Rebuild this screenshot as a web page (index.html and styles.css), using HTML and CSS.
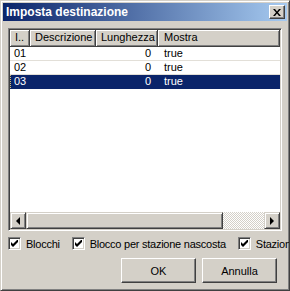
FILE: index.html
```html
<!DOCTYPE html>
<html>
<head>
	<title>Imposta destinazione</title>
	<link rel="stylesheet" href="styles.css">
</head>
<body>
	<div class="window">
		<!-- Title bar -->
		<div class="titlebar">
			<span class="title">Imposta destinazione</span>
			<button class="close-btn" type="button">
				<svg width="8" height="7" viewBox="0 0 8 7"><path d="M0 0h2l2 2.5L6 0h2L5 3.5 8 7H6L4 4.5 2 7H0l3-3.5z" fill="#000"/></svg>
			</button>
		</div>

		<div class="content">
			<!-- Table -->
			<div class="listbox">
				<div class="grid">
					<div class="row header">
						<div class="cell c-id">I..</div>
						<div class="cell c-desc">Descrizione</div>
						<div class="cell c-len">Lunghezza</div>
						<div class="cell c-show">Mostra</div>
					</div>
					<div class="row">
						<div class="cell c-id">01</div>
						<div class="cell c-desc"></div>
						<div class="cell c-len num">0</div>
						<div class="cell c-show">true</div>
					</div>
					<div class="row">
						<div class="cell c-id">02</div>
						<div class="cell c-desc"></div>
						<div class="cell c-len num">0</div>
						<div class="cell c-show">true</div>
					</div>
					<div class="row selected">
						<div class="cell c-id focus">03</div>
						<div class="cell c-desc"></div>
						<div class="cell c-len num">0</div>
						<div class="cell c-show">true</div>
					</div>
				</div>
				<div class="hscroll">
					<div class="sbtn"><span class="arrow left"></span></div>
					<div class="thumb"></div>
					<div class="track"></div>
					<div class="sbtn"><span class="arrow right"></span></div>
				</div>
			</div>

			<!-- Options -->
			<div class="checks">
				<label class="check"><span class="box"><svg width="7" height="7" viewBox="0 0 7 7"><path d="M0 2l2 2 5-5v3l-5 5-2-2z" fill="#000"/></svg></span>Blocchi</label>
				<label class="check"><span class="box"><svg width="7" height="7" viewBox="0 0 7 7"><path d="M0 2l2 2 5-5v3l-5 5-2-2z" fill="#000"/></svg></span>Blocco per stazione nascosta</label>
				<label class="check"><span class="box"><svg width="7" height="7" viewBox="0 0 7 7"><path d="M0 2l2 2 5-5v3l-5 5-2-2z" fill="#000"/></svg></span>Stazioni</label>
			</div>

			<!-- Buttons -->
			<div class="buttons">
				<button class="btn" type="button">OK</button>
				<button class="btn" type="button">Annulla</button>
			</div>
		</div>
	</div>
</body>
</html>
```

FILE: styles.css
```css
body {
	margin: 0;
	background-color: #d4d0c8;
	font-family: "Liberation Sans", Arial, sans-serif;
	font-size: 11px;
	color: #000;
}

.window {
	width: 290px;
	height: 291px;
	box-sizing: border-box;
	padding: 2px;
	border: 1px solid;
	border-color: #d4d0c8 #404040 #404040 #d4d0c8;
	box-shadow: inset 1px 1px #fff, inset -1px -1px #808080;
	background-color: #d4d0c8;
	display: flex;
	flex-direction: column;
	overflow: hidden;
}

.titlebar {
	height: 18px;
	flex: none;
	display: flex;
	align-items: center;
	justify-content: space-between;
	padding: 0 2px 0 3px;
	background: linear-gradient(to right, #0a246a, #a6caf0);
}

.title {
	color: #fff;
	font-weight: bold;
	font-size: 12px;
}

.close-btn {
	width: 16px;
	height: 14px;
	padding: 0;
	box-sizing: border-box;
	border: 1px solid;
	border-color: #fff #404040 #404040 #fff;
	box-shadow: inset -1px -1px #808080, inset 1px 1px #d4d0c8;
	background-color: #d4d0c8;
	display: flex;
	align-items: center;
	justify-content: center;
}

.close-btn svg {
	display: block;
	margin-left: -1px;
}

.content {
	flex: 1;
	padding: 7px 5px 0 5px;
	display: flex;
	flex-direction: column;
	min-width: 0;
}

.listbox {
	height: 203px;
	box-sizing: border-box;
	padding: 1px;
	border: 1px solid;
	border-color: #808080 #fff #fff #808080;
	box-shadow: inset 1px 1px #404040, inset -1px -1px #d4d0c8;
	background-color: #fff;
	display: flex;
	flex-direction: column;
}

.grid {
	flex: 1;
	overflow: hidden;
}

.row {
	display: flex;
	height: 14px;
	box-sizing: border-box;
	border-bottom: 1px solid #e2dfd8;
	line-height: 13px;
}

.row.header {
	height: 17px;
	border-bottom: none;
	line-height: 15px;
}

.cell {
	box-sizing: border-box;
	padding-left: 4px;
	white-space: nowrap;
	overflow: hidden;
}

.header .cell {
	background-color: #d4d0c8;
	border-right: 1px solid #404040;
	border-bottom: 1px solid #404040;
	box-shadow: inset 1px 1px #fff, inset -1px -1px #808080;
	padding-left: 5px;
}

.c-id { width: 20px; }
.c-desc { width: 66px; }
.c-len { width: 62px; }
.c-show { flex: 1; padding-left: 6px; }

.row .num {
	text-align: right;
	padding-right: 7px;
}

.header .c-len { text-align: left; }
.header .c-show { padding-left: 6px; }

.row.selected {
	background-color: #0a246a;
	color: #fff;
	border-bottom-color: #0a246a;
}

.focus {
	border-left: 1px dotted #d8c070;
	padding-left: 3px;
}

.hscroll {
	height: 17px;
	flex: none;
	display: flex;
}

.sbtn {
	width: 16px;
	box-sizing: border-box;
	border: 1px solid;
	border-color: #d4d0c8 #404040 #404040 #d4d0c8;
	box-shadow: inset 1px 1px #fff, inset -1px -1px #808080;
	background-color: #d4d0c8;
	display: flex;
	align-items: center;
	justify-content: center;
}

.arrow {
	width: 0;
	height: 0;
	border-top: 4px solid transparent;
	border-bottom: 4px solid transparent;
}

.arrow.left { border-right: 4px solid #000; margin-left: -1px; }
.arrow.right { border-left: 4px solid #000; }

.thumb {
	width: 197px;
	box-sizing: border-box;
	border: 1px solid;
	border-color: #d4d0c8 #404040 #404040 #d4d0c8;
	box-shadow: inset 1px 1px #fff, inset -1px -1px #808080;
	background-color: #d4d0c8;
}

.track {
	flex: 1;
	background: repeating-conic-gradient(#d4d0c8 0 25%, #fff 0 50%) 0 0 / 2px 2px;
}

.checks {
	display: flex;
	align-items: center;
	margin-top: 6px;
	height: 13px;
	white-space: nowrap;
	letter-spacing: -0.25px;
}

.check {
	display: flex;
	align-items: center;
	margin-right: 12px;
	flex: none;
}

.box {
	width: 13px;
	height: 13px;
	box-sizing: border-box;
	border: 1px solid;
	border-color: #808080 #fff #fff #808080;
	box-shadow: inset 1px 1px #404040, inset -1px -1px #d4d0c8;
	background-color: #fff;
	margin-right: 5px;
	display: flex;
	align-items: center;
	justify-content: center;
}

.box svg { display: block; }

.buttons {
	display: flex;
	justify-content: flex-end;
	gap: 6px;
	margin-top: 8px;
	padding-right: 5px;
}

.btn {
	width: 75px;
	height: 25px;
	box-sizing: border-box;
	border: 1px solid;
	border-color: #fff #404040 #404040 #fff;
	box-shadow: inset -1px -1px #808080, inset 1px 1px #d4d0c8;
	background-color: #d4d0c8;
	font-family: "Liberation Sans", Arial, sans-serif;
	font-size: 11px;
	color: #000;
	padding: 0;
}
```
